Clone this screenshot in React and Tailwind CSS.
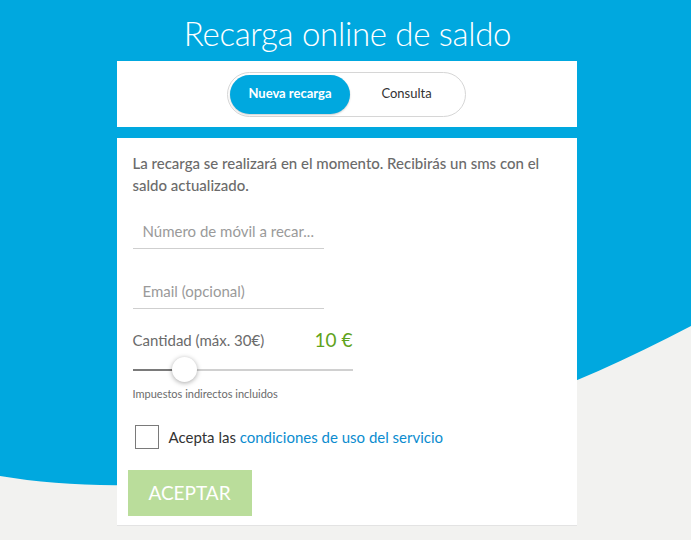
import React, { useState } from 'react';

export default function App() {
  const [tab, setTab] = useState('nueva');
  const [amount, setAmount] = useState(10);
  const [accepted, setAccepted] = useState(false);

  return (
    <div className="relative h-[540px] w-full overflow-hidden bg-[#00a8df] font-['Lato',sans-serif]">
      {/* bottom curve */}
      <svg className="absolute inset-0 h-full w-full" viewBox="0 0 691 540" preserveAspectRatio="none">
        <path d="M0,476 C170,505 420,468 691,326 L691,540 L0,540 Z" fill="#f2f2f0" />
      </svg>

      <div className="relative flex flex-col items-center">
        <h1 className="mt-[11px] ml-[4px] text-[33px] leading-[44px] font-light tracking-[-0.3px] text-white">
          Recarga online de saldo
        </h1>

        {/* tabs */}
        <div className="mt-[6px] ml-[2px] flex h-[66px] w-[460px] items-center justify-center bg-white">
          <div className="flex h-[45px] w-[239px] items-center rounded-full border border-[#d6d6d6] p-[2px]">
            <button
              onClick={() => setTab('nueva')}
              className={`h-[39px] w-[120px] rounded-full text-[13px] font-bold ${tab === 'nueva' ? 'bg-[#00a8df] text-white shadow-[0_1px_2px_rgba(0,0,0,0.2)]' : 'text-[#333]'}`}
            >
              Nueva recarga
            </button>
            <button
              onClick={() => setTab('consulta')}
              className={`h-[39px] flex-1 rounded-full text-[13px] ${tab === 'consulta' ? 'bg-[#00a8df] font-bold text-white' : 'text-[#333]'}`}
            >
              Consulta
            </button>
          </div>
        </div>

        {/* form */}
        <div className="mt-[11px] ml-[2px] flex h-[388px] w-[460px] flex-col border-b border-[#e3e3e3] bg-white px-4 pt-[14px]">
          <p className="w-[410px] text-[15px] leading-[22px] font-medium text-[#6b6b6b]">
            La recarga se realizará en el momento. Recibirás un sms con el saldo actualizado.
          </p>

          <input
            className="mt-[18px] h-[35px] w-[191px] border-b border-[#cfcfcf] px-[10px] text-[15px] text-[#333] outline-none placeholder:text-[#9a9a9a]"
            placeholder="Número de móvil a recar..."
          />
          <input
            className="mt-[25px] h-[35px] w-[191px] border-b border-[#cfcfcf] px-[10px] text-[15px] text-[#333] outline-none placeholder:text-[#9a9a9a]"
            placeholder="Email (opcional)"
          />

          <div className="mt-[19px] flex h-[24px] w-[220px] items-center justify-between">
            <span className="text-[15px] text-[#6b6b6b]">Cantidad (máx. 30€)</span>
            <span className="text-[19px] text-[#5fa31c]">{amount} €</span>
          </div>

          {/* slider */}
          <div className="relative mt-[5px] h-[26px] w-[220px]">
            <div className="absolute left-0 right-0 top-[12px] h-[2px] bg-[#d0d0d0]" />
            <div className="absolute left-0 top-[12px] h-[2px] w-[40px] bg-[#7a7a7a]" />
            <div className="absolute left-[39px] top-0 h-[25px] w-[25px] rounded-full bg-white shadow-[0_1px_5px_rgba(0,0,0,0.35)]" />
            <input
              type="range"
              min="1"
              max="30"
              value={amount}
              onChange={(e) => setAmount(Number(e.target.value))}
              className="absolute inset-0 opacity-0"
            />
          </div>
          <span className="mt-[4px] text-[11px] leading-[14px] text-[#6b6b6b]">Impuestos indirectos incluidos</span>

          <label className="mt-[24px] flex items-center">
            <span
              onClick={() => setAccepted(!accepted)}
              className="ml-[2px] flex h-[24px] w-[24px] items-center justify-center border border-[#7a7a7a] text-[14px] text-[#333]"
            >
              {accepted ? '✓' : ''}
            </span>
            <span className="ml-[10px] text-[15px] text-[#333]">
              Acepta las <a className="text-[#0b8ccf]">condiciones de uso del servicio</a>
            </span>
          </label>

          <button className="mt-[21px] -ml-[5px] h-[46px] w-[124px] bg-[#badd9b] text-[19px] text-white">
            ACEPTAR
          </button>
        </div>
      </div>
    </div>
  );
}
